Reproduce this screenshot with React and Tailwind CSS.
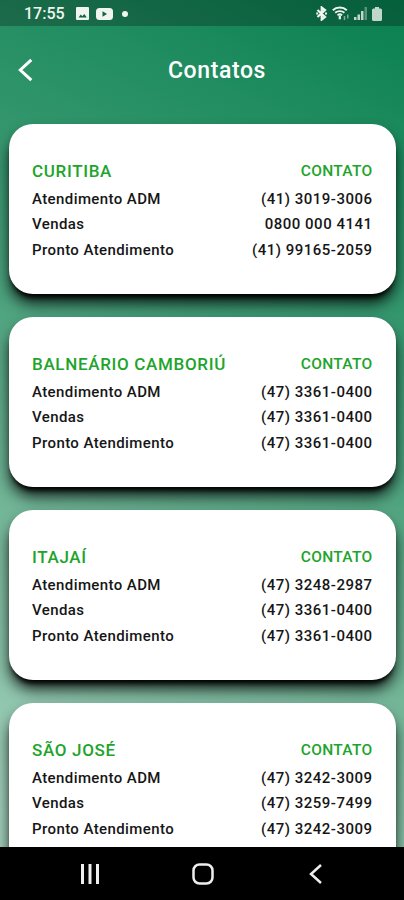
import React from 'react';

const contacts = [
  {
    city: 'CURITIBA',
    rows: [
      { label: 'Atendimento ADM', phone: '(41) 3019-3006' },
      { label: 'Vendas', phone: '0800 000 4141' },
      { label: 'Pronto Atendimento', phone: '(41) 99165-2059' },
    ],
  },
  {
    city: 'BALNEÁRIO CAMBORIÚ',
    rows: [
      { label: 'Atendimento ADM', phone: '(47) 3361-0400' },
      { label: 'Vendas', phone: '(47) 3361-0400' },
      { label: 'Pronto Atendimento', phone: '(47) 3361-0400' },
    ],
  },
  {
    city: 'ITAJAÍ',
    rows: [
      { label: 'Atendimento ADM', phone: '(47) 3248-2987' },
      { label: 'Vendas', phone: '(47) 3361-0400' },
      { label: 'Pronto Atendimento', phone: '(47) 3361-0400' },
    ],
  },
  {
    city: 'SÃO JOSÉ',
    rows: [
      { label: 'Atendimento ADM', phone: '(47) 3242-3009' },
      { label: 'Vendas', phone: '(47) 3259-7499' },
      { label: 'Pronto Atendimento', phone: '(47) 3242-3009' },
    ],
  },
];

const StatusBar = () => (
  <div className="flex h-[26px] shrink-0 items-center justify-between bg-black/25 pl-6 pr-[22px] pt-px text-[#f0f5ef]">
    <div className="flex items-center">
      <span className="w-[41px] whitespace-nowrap text-[16px] font-medium leading-none">17:55</span>
      <svg className="ml-[11px]" width="13" height="13" viewBox="0 0 13 13">
        <rect width="13" height="13" rx="1" fill="currentColor" />
        <path d="M2.5 10.5l2.3-3 1.5 1.8L8.3 7l2.5 3.5z" fill="#17613f" />
      </svg>
      <svg className="ml-[7px]" width="17" height="12" viewBox="0 0 17 12">
        <rect width="17" height="12" rx="3.5" fill="currentColor" />
        <path d="M6.5 3.3v5.4L11 6z" fill="#17613f" />
      </svg>
      <span className="ml-[9px] h-[6px] w-[6px] rounded-full bg-current" />
    </div>
    <div className="flex items-center">
      <svg width="12" height="15" viewBox="0 0 12 15" fill="none" stroke="currentColor" strokeWidth="2.2">
        <path d="M1.5 4l7.5 7-3.3 2.600V1.500L9 4l-7.500 7" />
        <path d="M.2 7.500h2M9 7.500h2" />
      </svg>
      <svg className="ml-[4px]" width="18" height="15" viewBox="0 0 18 15" fill="none" stroke="currentColor">
        <path d="M.8 4.200C4.600.6 11 .6 14.800 4.200" strokeWidth="2" />
        <path d="M3.200 6.800c2.500-2.300 6.700-2.300 9.200 0" strokeWidth="1.900" />
        <path d="M5.500 9.300c1.400-1.300 3.200-1.300 4.600 0" strokeWidth="1.800" />
        <path d="M7.800 9.500v3.800" strokeWidth="2.200" />
        <path d="M12.500 10v4M15.800 8.500v4" strokeWidth="1.500" opacity=".5" />
      </svg>
      <svg className="ml-[4px]" width="13" height="13" viewBox="0 0 13 13" fill="currentColor">
        <path d="M0 10h2.500v3H0zM3.500 7.500H6V13H3.500zM7 4h2.500v9H7z" opacity=".8" />
        <path d="M10.500 0H13v13h-2.500z" opacity=".35" />
      </svg>
      <svg className="ml-[5px]" width="10" height="14" viewBox="0 0 10 14" fill="currentColor" opacity=".8">
        <path d="M3 0h4v1.500h1.500Q10 1.500 10 3v9.500Q10 14 8.500 14h-7Q0 14 0 12.500V3q0-1.500 1.500-1.500H3z" />
      </svg>
    </div>
  </div>
);

const Header = () => (
  <header className="grid h-[98px] shrink-0 grid-cols-[60px_1fr_60px] items-start pt-[32px] text-white">
    <button type="button" aria-label="Voltar" className="pl-[18px]">
      <svg width="16" height="24" viewBox="0 0 16 24" fill="none" stroke="currentColor" strokeWidth="3">
        <path d="M13.300 1.800L2.300 12l11 10.200" />
      </svg>
    </button>
    <h1 className="pl-[30px] text-center text-[23px] font-medium leading-[26px] tracking-[0.600px]">Contatos</h1>
  </header>
);

const ContactCard = ({ city, rows }) => (
  <section className="h-[170px] shrink-0 rounded-[24px] bg-white pl-[23px] pr-[23.500px] pt-[33px] shadow-[0_10px_15px_-1px_rgba(0,0,0,0.85),0_6px_5px_-3px_#000]">
    <div className="flex h-[29px] items-center justify-between font-medium text-[#20a42b]">
      <h2 className="text-[17px] tracking-[0.670px]">{city}</h2>
      <span className="text-[15.500px] tracking-[0.300px]">CONTATO</span>
    </div>
    {rows.map((row) => (
      <div
        key={row.label}
        className="flex h-[25.700px] items-center justify-between text-[15px] font-medium text-[#161616]"
      >
        <span className="tracking-[0.400px]">{row.label}</span>
        <span className="tracking-[0.500px]">{row.phone}</span>
      </div>
    ))}
  </section>
);

const NavigationBar = () => (
  <nav className="grid h-[53px] shrink-0 grid-cols-3 items-center bg-black pl-[34px] pr-[32px] text-[#eeeeee]">
    <svg className="mx-auto" width="18" height="20" viewBox="0 0 18 20" fill="currentColor">
      <path d="M0 0h3v20H0zM7.500 0h3v20h-3zM15 0h3v20h-3z" />
    </svg>
    <svg className="mx-auto" width="22" height="22" viewBox="0 0 22 22" fill="none" stroke="currentColor" strokeWidth="2.500">
      <rect x="1.500" y="1.500" width="19" height="19" rx="6" />
    </svg>
    <svg className="mx-auto" width="13" height="20" viewBox="0 0 13 20" fill="none" stroke="currentColor" strokeWidth="2.500">
      <path d="M12 1L2 10l10 9" />
    </svg>
  </nav>
);

const App = () => (
  <div className="flex h-[900px] w-[404px] flex-col overflow-hidden bg-[linear-gradient(205deg,#087f4f_0%,#218d61_16%,#419c76_38%,#73b597_64%,#a3d0bc_92%)] font-['Roboto',sans-serif]">
    <StatusBar />
    <Header />
    <main className="-mt-[24px] flex min-h-0 flex-1 flex-col gap-[23px] overflow-hidden pl-[9px] pr-[8px] pt-[24px]">
      {contacts.map((contact) => (
        <ContactCard key={contact.city} {...contact} />
      ))}
    </main>
    <NavigationBar />
  </div>
);

export default App;
